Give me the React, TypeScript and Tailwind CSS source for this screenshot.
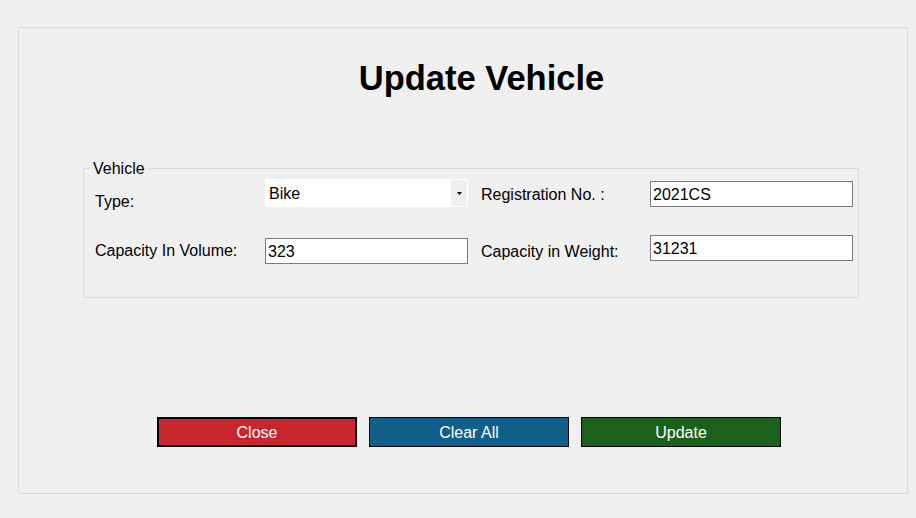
import React from "react"

const font = "font-['Liberation_Sans',Arial,sans-serif]"

function TextBox({ value, className }: { value: string; className?: string }) {
  return (
    <input
      readOnly
      defaultValue={value}
      className={`h-[26px] w-[203px] border border-[#7a7a7a] bg-white px-[2px] pt-[2px] text-[16px] text-black outline-none ${className ?? ""}`}
    />
  )
}

function ComboBox({ value }: { value: string }) {
  return (
    <div className="mt-[1px] flex h-[28px] w-[203px] bg-white">
      <div className="flex flex-1 items-center pl-[4px] pt-[2px] text-[16px] leading-[18px] text-black">{value}</div>
      <div className="my-[1px] mr-[1px] flex w-[16px] items-center justify-center bg-[#f0f0f0]">
        <svg width="5" height="3" viewBox="0 0 5 3">
          <polygon points="0,0 5,0 2.5,3" fill="#000" />
        </svg>
      </div>
    </div>
  )
}

export default function App() {
  return (
    <div className={`h-[518px] w-[916px] bg-[#f0f0f0] pl-[18px] pt-[27px] ${font}`}>
      <div className="flex h-[467px] w-[890px] flex-col border border-[#dadada]">
        <h1 className="mt-[33px] pl-[37px] text-center text-[34.5px] font-bold leading-[35px] text-black">
          Update Vehicle
        </h1>

        <fieldset className="ml-[64px] mt-[62px] h-[140px] w-[776px] border border-[#dcdcdc]">
          <legend className="ml-[6px] px-[3px] pt-[2px] text-[16px] leading-[18px] text-black">Vehicle</legend>

          <div className="flex h-[54px] items-start text-[16px] leading-[18px] text-black">
            <div className="mt-[15px] w-[181px] pl-[11px]">Type:</div>
            <ComboBox value="Bike" />
            <div className="ml-[13px] mt-[8px] w-[169px]">Registration No. :</div>
            <TextBox value="2021CS" className="mt-[3px]" />
          </div>

          <div className="flex items-start text-[16px] leading-[18px] text-black">
            <div className="mt-[10px] w-[181px] pl-[11px]">Capacity In Volume:</div>
            <TextBox value="323" className="mt-[6px]" />
            <div className="ml-[13px] mt-[11px] w-[169px]">Capacity in Weight:</div>
            <TextBox value="31231" className="mt-[3px]" />
          </div>
        </fieldset>

        <div className="ml-[138px] mt-[119px] flex gap-[12px] text-[16px] leading-[18px] text-white">
          <button className="flex h-[30px] w-[200px] items-center justify-center border-2 border-black bg-[#c8252f] pt-[2px]">
            Close
          </button>
          <button className="flex h-[30px] w-[200px] items-center justify-center border border-black bg-[#0f5f8a] pt-[2px]">
            Clear All
          </button>
          <button className="flex h-[30px] w-[200px] items-center justify-center border border-black bg-[#1b611b] pt-[2px]">
            Update
          </button>
        </div>
      </div>
    </div>
  )
}
